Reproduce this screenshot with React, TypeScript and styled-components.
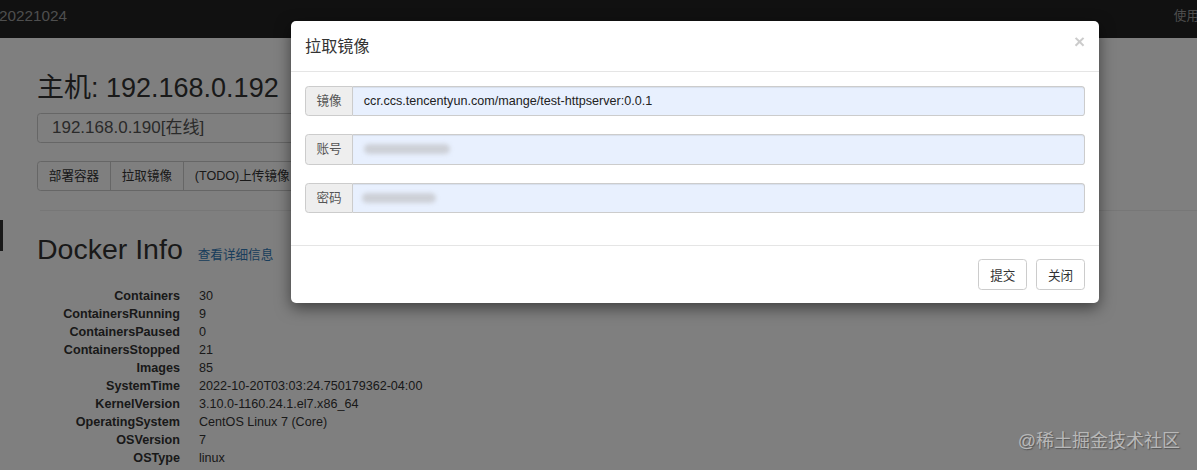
import React from "react";
import styled, { createGlobalStyle } from "styled-components";

const FONT = `"Liberation Sans", Arial, "Noto Sans CJK SC", sans-serif`;

const Global = createGlobalStyle`
  html, body { margin: 0; padding: 0; background: #fff; overflow: hidden; }
  body { font-family: ${FONT}; font-size: 12.6px; line-height: 18px; color: #333; }
  * { box-sizing: border-box; }
`;

const Page = styled.div`
  position: relative;
  width: 1197px;
  height: 470px;
  overflow: hidden;
`;

const Navbar = styled.div`
  height: 38px;
  background: #222;
  display: flex;
  align-items: center;
  justify-content: space-between;
  color: #9d9d9d;
`;

const Brand = styled.span`
  font-size: 15.3px;
  margin-left: -1px;
  margin-top: -6px;
`;

const NavRight = styled.span`
  font-size: 12.6px;
  margin-right: -2px;
  margin-top: -6px;
`;

const Container = styled.div`
  padding-left: 37px;
`;

const HostTitle = styled.h2`
  margin: 35px 0 10px;
  font-size: 27px;
  line-height: 30px;
  font-weight: 400;
  color: #333;
`;

const SelectBox = styled.div`
  width: 520px;
  height: 30px;
  border: 1px solid #ccc;
  border-radius: 3.6px;
  padding: 0 14px;
  display: flex;
  align-items: center;
  font-size: 17px;
  color: #555;
`;

const BtnGroup = styled.div`
  display: flex;
  margin-top: 18px;
`;

const GroupBtn = styled.div<{ $first?: boolean }>`
  height: 30px;
  padding: 0 10.8px;
  display: flex;
  align-items: center;
  border: 1px solid #ccc;
  margin-left: ${(p) => (p.$first ? "0" : "-1px")};
  border-radius: ${(p) => (p.$first ? "3.6px 0 0 3.6px" : "0")};
  background: #fff;
  color: #333;
  font-size: 12.6px;
  white-space: nowrap;
`;

const Rule = styled.hr`
  margin: 19px 0 0 3px;
  border: 0;
  border-top: 1px solid #eee;
`;

const InfoSection = styled.div`
  position: relative;
`;

const EdgeMark = styled.div`
  position: absolute;
  left: 0;
  top: 9px;
  width: 3px;
  height: 31px;
  background: #333;
`;

const InfoHead = styled.div`
  padding: 23px 0 0 37px;
  display: flex;
  align-items: baseline;
  gap: 15px;
`;

const InfoTitle = styled.h1`
  margin: 0;
  font-size: 28.5px;
  line-height: 31px;
  font-weight: 400;
  color: #333;
`;

const InfoLink = styled.a`
  font-size: 12.6px;
  color: #337ab7;
  text-decoration: none;
`;

const DL = styled.dl`
  margin: 22px 0 0 37px;
  display: grid;
  grid-template-columns: 143px 1fr;
  column-gap: 19px;
  line-height: 18px;
`;

const DT = styled.dt`
  font-weight: 700;
  text-align: right;
  white-space: nowrap;
`;

const DD = styled.dd`
  margin: 0;
  white-space: nowrap;
`;

const Backdrop = styled.div`
  position: absolute;
  inset: 0;
  background: rgba(0, 0, 0, 0.5);
`;

const Modal = styled.div`
  position: absolute;
  left: 291px;
  top: 21px;
  width: 808px;
  background: #fff;
  border-radius: 5px;
  box-shadow: 0 5px 15px rgba(0, 0, 0, 0.5);
  color: #333;
`;

const ModalHeader = styled.div`
  padding: 13.5px 14px;
  border-bottom: 1px solid #e5e5e5;
  display: flex;
  align-items: center;
  justify-content: space-between;
`;

const ModalTitle = styled.h4`
  margin: 0;
  font-size: 16.2px;
  line-height: 23px;
  font-weight: 400;
`;

const Close = styled.span`
  font-size: 19px;
  font-weight: 700;
  line-height: 1;
  color: #000;
  opacity: 0.2;
  margin-top: -9px;
  margin-right: 0;
`;

const ModalBody = styled.div`
  padding: 13.5px 14px;
  display: flex;
  flex-direction: column;
  gap: 18px;
  padding-bottom: 31.5px;
`;

const InputGroup = styled.div`
  display: flex;
  height: 30.6px;
`;

const Addon = styled.div`
  width: 48px;
  flex: none;
  display: flex;
  align-items: center;
  justify-content: center;
  background: #eee;
  border: 1px solid #ccc;
  border-radius: 3.6px 0 0 3.6px;
  color: #555;
  font-size: 12.6px;
`;

const Field = styled.div`
  flex: 1;
  display: flex;
  align-items: center;
  padding: 0 10.8px;
  background: #e8f0fe;
  border: 1px solid #ccc;
  border-left: 0;
  border-radius: 0 3.6px 3.6px 0;
  color: #222;
  font-size: 12.6px;
  box-shadow: inset 0 1px 1px rgba(0, 0, 0, 0.075);
`;

const Redacted = styled.span<{ $w: number; $dx: number }>`
  display: inline-block;
  width: ${(p) => p.$w}px;
  height: 10px;
  margin-left: ${(p) => p.$dx}px;
  background: #cdd0d7;
  border-radius: 5px;
  filter: blur(2px);
`;

const ModalFooter = styled.div`
  border-top: 1px solid #e5e5e5;
  padding: 13.5px 14px 13.5px;
  display: flex;
  justify-content: flex-end;
  gap: 9px;
`;

const FooterBtn = styled.button`
  height: 30.6px;
  padding: 0 10.8px;
  background: #fff;
  border: 1px solid #ccc;
  border-radius: 3.6px;
  font-family: ${FONT};
  font-size: 12.6px;
  color: #333;
`;

const Watermark = styled.div`
  position: absolute;
  right: 17px;
  bottom: 18px;
  font-size: 18px;
  line-height: 22px;
  color: #b8b8b8;
  text-shadow: 1px 1px 1px #555;
`;

const info: [string, string][] = [
  ["Containers", "30"],
  ["ContainersRunning", "9"],
  ["ContainersPaused", "0"],
  ["ContainersStopped", "21"],
  ["Images", "85"],
  ["SystemTime", "2022-10-20T03:03:24.750179362-04:00"],
  ["KernelVersion", "3.10.0-1160.24.1.el7.x86_64"],
  ["OperatingSystem", "CentOS Linux 7 (Core)"],
  ["OSVersion", "7"],
  ["OSType", "linux"],
];

export default function App() {
  return (
    <Page>
      <Global />
      <Navbar>
        <Brand>20221024</Brand>
        <NavRight>使用</NavRight>
      </Navbar>
      <Container>
        <HostTitle>主机: 192.168.0.192</HostTitle>
        <SelectBox>192.168.0.190[在线]</SelectBox>
        <BtnGroup>
          <GroupBtn $first>部署容器</GroupBtn>
          <GroupBtn>拉取镜像</GroupBtn>
          <GroupBtn>(TODO)上传镜像</GroupBtn>
          <GroupBtn>镜像列表</GroupBtn>
        </BtnGroup>
        <Rule />
      </Container>
      <InfoSection>
        <EdgeMark />
        <InfoHead>
          <InfoTitle>Docker Info</InfoTitle>
          <InfoLink href="#">查看详细信息</InfoLink>
        </InfoHead>
        <DL>
          {info.map(([k, v]) => (
            <React.Fragment key={k}>
              <DT>{k}</DT>
              <DD>{v}</DD>
            </React.Fragment>
          ))}
        </DL>
      </InfoSection>
      <Backdrop />
      <Modal>
        <ModalHeader>
          <ModalTitle>拉取镜像</ModalTitle>
          <Close>×</Close>
        </ModalHeader>
        <ModalBody>
          <InputGroup>
            <Addon>镜像</Addon>
            <Field>ccr.ccs.tencentyun.com/mange/test-httpserver:0.0.1</Field>
          </InputGroup>
          <InputGroup>
            <Addon>账号</Addon>
            <Field>
              <Redacted $w={86} $dx={0} />
            </Field>
          </InputGroup>
          <InputGroup>
            <Addon>密码</Addon>
            <Field>
              <Redacted $w={74} $dx={-2} />
            </Field>
          </InputGroup>
        </ModalBody>
        <ModalFooter>
          <FooterBtn>提交</FooterBtn>
          <FooterBtn>关闭</FooterBtn>
        </ModalFooter>
      </Modal>
      <Watermark>@稀土掘金技术社区</Watermark>
    </Page>
  );
}
